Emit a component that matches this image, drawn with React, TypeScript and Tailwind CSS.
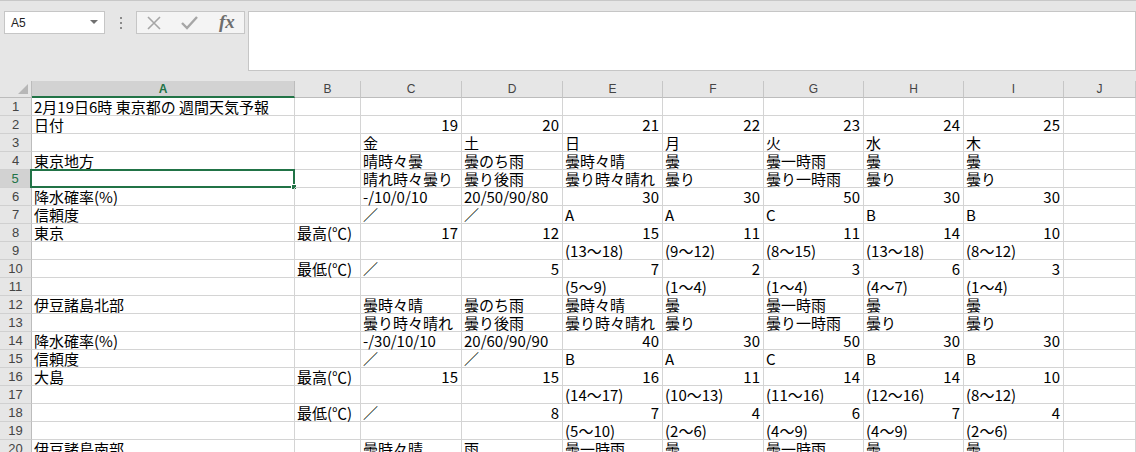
import React from 'react';

type Cell = string | { v: string; r?: boolean };

const COLS = ['A', 'B', 'C', 'D', 'E', 'F', 'G', 'H', 'I', 'J'];
const WIDTHS = ['w-[263px]', 'w-[66px]', 'w-[101px]', 'w-[101px]', 'w-[100px]', 'w-[101px]', 'w-[100px]', 'w-[100px]', 'w-[100px]', 'w-[72px]'];

const n = (v: string): Cell => ({ v, r: true });

const weather1 = ['曇時々晴', '曇のち雨', '曇時々晴', '曇', '曇一時雨', '曇', '曇'];
const weather2 = ['曇り時々晴れ', '曇り後雨', '曇り時々晴れ', '曇り', '曇り一時雨', '曇り', '曇り'];

const rows: Cell[][] = [
  ['2月19日6時 東京都の 週間天気予報'],
  ['日付', '', n('19'), n('20'), n('21'), n('22'), n('23'), n('24'), n('25')],
  ['', '', '金', '土', '日', '月', '火', '水', '木'],
  ['東京地方', '', '晴時々曇', ...weather1.slice(1)],
  ['', '', '晴れ時々曇り', ...weather2.slice(1)],
  ['降水確率(%)', '', '-/10/0/10', '20/50/90/80', n('30'), n('30'), n('50'), n('30'), n('30')],
  ['信頼度', '', '／', '／', 'A', 'A', 'C', 'B', 'B'],
  ['東京', '最高(℃)', n('17'), n('12'), n('15'), n('11'), n('11'), n('14'), n('10')],
  ['', '', '', '', '(13～18)', '(9～12)', '(8～15)', '(13～18)', '(8～12)'],
  ['', '最低(℃)', '／', n('5'), n('7'), n('2'), n('3'), n('6'), n('3')],
  ['', '', '', '', '(5～9)', '(1～4)', '(1～4)', '(4～7)', '(1～4)'],
  ['伊豆諸島北部', '', ...weather1],
  ['', '', ...weather2],
  ['降水確率(%)', '', '-/30/10/10', '20/60/90/90', n('40'), n('30'), n('50'), n('30'), n('30')],
  ['信頼度', '', '／', '／', 'B', 'A', 'C', 'B', 'B'],
  ['大島', '最高(℃)', n('15'), n('15'), n('16'), n('11'), n('14'), n('14'), n('10')],
  ['', '', '', '', '(14～17)', '(10～13)', '(11～16)', '(12～16)', '(8～12)'],
  ['', '最低(℃)', '／', n('8'), n('7'), n('4'), n('6'), n('7'), n('4')],
  ['', '', '', '', '(5～10)', '(2～6)', '(4～9)', '(4～9)', '(2～6)'],
  ['伊豆諸島南部', '', '曇時々晴', '雨', '曇一時雨', '曇', '曇一時雨', '曇', '曇'],
];

const FormulaBar: React.FC = () => (
  <div className="h-[81px] bg-[#e6e6e6] border-t border-[#c8c8c8] flex items-start pt-[10px] pl-[4px]">
    {/* name box */}
    <div className="w-[101px] h-[23px] bg-white border border-[#c6c6c6] flex items-center justify-between pl-[6px] pr-[6px]">
      <span className="text-[12px] text-[#222] font-['Liberation_Sans',sans-serif]">A5</span>
      <svg width="8" height="5" viewBox="0 0 8 5">
        <path d="M0 0 L8 0 L4 4 Z" fill="#707070" />
      </svg>
    </div>
    <div className="w-[31px] h-[23px] flex flex-col items-center justify-center gap-[3px]">
      <span className="w-[2px] h-[2px] bg-[#8a8a8a]" />
      <span className="w-[2px] h-[2px] bg-[#8a8a8a]" />
      <span className="w-[2px] h-[2px] bg-[#8a8a8a]" />
    </div>
    {/* cancel / enter / fx */}
    <div className="w-[109px] h-[23px] bg-[#f4f4f4] border border-[#c6c6c6] flex items-center pl-[9px]">
      <svg width="16" height="14" viewBox="0 0 16 14">
        <path d="M2 1 L14 13 M14 1 L2 13" stroke="#a6a6a6" strokeWidth="1.6" />
      </svg>
      <svg width="18" height="14" viewBox="0 0 18 14" className="ml-[19px]">
        <path d="M1 7 L6 12 L16 1" stroke="#a6a6a6" strokeWidth="2.4" fill="none" />
      </svg>
      <span className="ml-[20px] text-[19px] leading-none italic font-bold text-[#6e6e6e] font-['Liberation_Serif',serif] -mt-[3px]">fx</span>
    </div>
    <div className="ml-[3px] flex-1 h-[60px] bg-white border border-[#c6c6c6]" />
  </div>
);

const HeaderRow: React.FC = () => (
  <div className="flex h-[17px] bg-[#e6e6e6] font-['Liberation_Sans',sans-serif] text-[12px]">
    <div className="w-[32px] shrink-0 border-r border-b border-[#bcbcbc] relative">
      <svg width="10" height="10" viewBox="0 0 10 10" className="absolute right-[3px] bottom-[3px]">
        <path d="M10 0 L10 10 L0 10 Z" fill="#b7b7b7" />
      </svg>
    </div>
    {COLS.map((c, i) => (
      <div
        key={c}
        className={`${WIDTHS[i]} shrink-0 flex items-center justify-center border-r ${
          i === 0
            ? 'bg-[#d2d2d2] border-r-[#bcbcbc] border-b-2 border-b-[#217346] text-[#217346] font-bold'
            : 'border-r-[#c6c6c6] border-b border-b-[#bcbcbc] text-[#444]'
        }`}
      >
        {c}
      </div>
    ))}
  </div>
);

const App: React.FC = () => {
  return (
    <div className="w-[1136px] h-[452px] overflow-hidden bg-white">
      <FormulaBar />
      <HeaderRow />
      <div className="font-['Noto_Sans_CJK_JP',sans-serif] text-[15px] text-black">
        {rows.map((row, ri) => {
          const selected = ri === 4;
          return (
            <div key={ri} className="flex h-[18px]">
              <div
                className={`w-[32px] shrink-0 flex items-center justify-center text-[13px] font-['Liberation_Sans',sans-serif] border-b border-b-[#d0d0d0] ${
                  selected
                    ? 'bg-[#d2d2d2] text-[#217346] border-r-2 border-r-[#217346]'
                    : 'bg-[#e6e6e6] text-[#444] border-r border-r-[#bcbcbc]'
                }`}
              >
                {ri + 1}
              </div>
              {COLS.map((c, ci) => {
                const cell = row[ci];
                const v = typeof cell === 'string' ? cell : cell?.v ?? '';
                const right = typeof cell === 'object' && cell?.r;
                return (
                  <div
                    key={c}
                    className={`${WIDTHS[ci]} shrink-0 relative border-r border-b border-[#d4d4d4] flex items-end leading-[17px] px-[2px] whitespace-nowrap ${
                      right ? 'justify-end pr-[3px]' : 'justify-start'
                    }`}
                  >
                    {v}
                    {selected && ci === 0 && (
                      <div className="absolute -left-[2px] -top-[1px] -right-[1px] -bottom-[1px] border-2 border-[#217346]">
                        <div className="absolute -right-[4px] -bottom-[4px] w-[6px] h-[6px] bg-[#217346] border border-white" />
                      </div>
                    )}
                  </div>
                );
              })}
            </div>
          );
        })}
      </div>
    </div>
  );
};

export default App;
